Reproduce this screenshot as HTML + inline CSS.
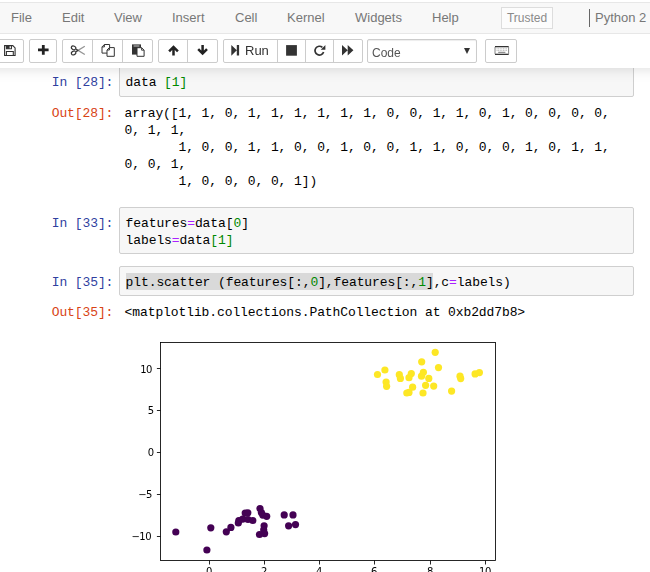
<!DOCTYPE html>
<html lang="en">
<head>
<meta charset="utf-8">
<title>Notebook</title>
<style>
html,body{margin:0;padding:0;}
body{width:650px;height:572px;overflow:hidden;background:#fff;position:relative;font-family:"Liberation Sans",Arial,sans-serif;font-size:13px;color:#000;}
#header{position:absolute;left:0;top:0;width:650px;height:68px;z-index:10;}
#header::before{content:"";position:absolute;left:-40px;right:-40px;top:0;bottom:0;background:#fff;box-shadow:0 0 12px 1px rgba(87,87,87,0.2);z-index:-1;}
#menubar{position:absolute;left:-6px;top:2px;width:670px;height:30px;background:#f8f8f8;border:1px solid #e7e7e7;border-radius:2px;}
.mi{position:absolute;top:10px;font-size:13px;line-height:15px;color:#777;white-space:nowrap;}
#trusted{position:absolute;left:501px;top:7px;width:52px;height:22px;border:1px solid #ddd;box-sizing:border-box;color:#8a8a8a;font-size:12px;line-height:20px;text-align:center;background:#fcfcfc;}
#ksep{position:absolute;left:589px;top:9px;width:1px;height:18px;background:#666;}
#kname{position:absolute;left:595px;top:10px;font-size:13px;line-height:15px;color:#777;white-space:nowrap;}
.btn{position:absolute;top:39px;height:24px;box-sizing:border-box;border:1px solid #ccc;background:#fff;}
.grp{border-radius:2px;}
.sep{position:absolute;top:0;width:1px;height:22px;background:#ccc;}
.ico{position:absolute;}
#runlbl{position:absolute;left:245px;top:43px;font-size:13px;line-height:15px;color:#333;}
#sel{position:absolute;left:367px;top:39px;width:110px;height:24px;box-sizing:border-box;border:1px solid #ccc;border-radius:2px;background:#fff;box-shadow:inset 0 1px 1px rgba(0,0,0,.075);}
#sel span{position:absolute;left:4px;top:6px;font-size:12px;line-height:14px;color:#555;}
#sel i{position:absolute;right:6px;top:7.5px;width:0;height:0;border-left:3.5px solid transparent;border-right:3.5px solid transparent;border-top:6px solid #333;}
.code{font-family:"Liberation Mono","DejaVu Sans Mono",monospace;font-size:13px;letter-spacing:-0.1px;line-height:17px;white-space:pre;}
.inbox{position:absolute;left:119px;width:515px;box-sizing:border-box;border:1px solid #cfcfcf;border-radius:2px;background:#f7f7f7;}
.ln{position:absolute;left:124.6px;height:17px;color:#000;}
.li{left:125.6px;}
#hl{position:absolute;left:125.6px;top:273px;width:307.6px;height:17px;background:#d9d9d9;}
.pr{position:absolute;left:51.7px;height:17px;}
.pin{color:#303f9f;}
.pout{color:#d84315;}
.n{color:#080;}
.o{color:#a2f;}
.hl{background:#d9d9d9;}
svg.plot{position:absolute;left:0;top:0;will-change:transform;}
</style>
</head>
<body>
<div id="header">
  <div id="menubar"></div>
  <div class="mi" style="left:11px">File</div>
  <div class="mi" style="left:62px">Edit</div>
  <div class="mi" style="left:114px">View</div>
  <div class="mi" style="left:172px">Insert</div>
  <div class="mi" style="left:235px">Cell</div>
  <div class="mi" style="left:287px">Kernel</div>
  <div class="mi" style="left:355px">Widgets</div>
  <div class="mi" style="left:432px">Help</div>
  <div id="trusted">Trusted</div>
  <div id="ksep"></div>
  <div id="kname">Python 2</div>

  <!-- toolbar -->
  <div class="btn grp" style="left:-5px;width:29px"></div>
  <div class="btn grp" style="left:29px;width:28px"></div>
  <div class="btn grp" style="left:62px;width:91px"><div class="sep" style="left:29px"></div><div class="sep" style="left:59px"></div></div>
  <div class="btn grp" style="left:158px;width:60px"><div class="sep" style="left:28px"></div></div>
  <div class="btn grp" style="left:223px;width:140px"><div class="sep" style="left:53px"></div><div class="sep" style="left:81px"></div><div class="sep" style="left:109px"></div></div>
  <div id="runlbl">Run</div>
  <div id="sel"><span>Code</span><i></i></div>
  <div class="btn grp" style="left:485px;width:32px"></div>

  <!-- icons -->
  <svg class="ico" style="left:0;top:0" width="650" height="68" viewBox="0 0 650 68">
    <!-- save -->
    <g fill="none" stroke="#333" stroke-width="1.1">
      <path d="M4.6 45.6h8.2l2.3 2.3v7.6h-10.5z"/>
      <path d="M6.4 45.6v3.2h5v-3.2z" fill="#333"/>
      <path d="M6.4 55.5v-4h6.9v4"/>
    </g>
    <path d="M9.6 46.2h1.3v2.1h-1.3z" fill="#fff"/>
    <!-- plus -->
    <path d="M41.9 45h2.8v3.5h3.9v2.8h-3.9v3.5h-2.8v-3.5h-3.9v-2.8h3.9z" fill="#222"/>
    <!-- scissors -->
    <g fill="none" stroke="#333" stroke-width="1.15">
      <ellipse cx="73.6" cy="47.8" rx="2.3" ry="1.8" transform="rotate(25 73.6 47.8)"/>
      <ellipse cx="73.6" cy="53" rx="2.3" ry="1.8" transform="rotate(-25 73.6 53)"/>
    </g>
    <path d="M75.6 48.9l9.2 5.6M75.6 51.9l9.2-5.6" fill="none" stroke="#959595" stroke-width="1.3"/>
    <path d="M75.6 48.9l2.8 1.7M75.6 51.9l2.8-1.7" fill="none" stroke="#333" stroke-width="1.1"/>
    <!-- copy -->
    <g fill="#fff" stroke="#333" stroke-width="1">
      <path d="M104.4 44.5h5.2v8.6h-7.6v-6.2z"/>
      <path d="M102 46.9h2.4v-2.4" fill="none"/>
      <path d="M109.4 47.6h4.9v8.7h-7.3v-6.3z"/>
      <path d="M107 50h2.4v-2.4" fill="none"/>
    </g>
    <!-- paste -->
    <path d="M132 44.4h9v10.2h-9z" fill="#333"/>
    <path d="M133.6 46h5.8" stroke="#ddd" stroke-width="0.9"/>
    <path d="M137 47.7h4.6l2.5 2.5v6.1h-7.1z" fill="#fff" stroke="#333" stroke-width="1"/>
    <path d="M141.6 47.7v2.5h2.5" fill="none" stroke="#333" stroke-width="0.9"/>
    <!-- arrow up -->
    <path d="M173.5 47.4v8.1M169.1 51.3l4.4-4.4 4.4 4.4" fill="none" stroke="#222" stroke-width="2.5"/>
    <!-- arrow down -->
    <path d="M202.6 45v8.1M198.2 49.2l4.4 4.4 4.4-4.4" fill="none" stroke="#222" stroke-width="2.5"/>
    <!-- run (step-forward) -->
    <path d="M231.3 44.9l5.5 5.4-5.5 5.4z M236.8 45h2.3v10.6h-2.3z" fill="#333"/>
    <!-- stop -->
    <rect x="286.1" y="45.1" width="10.8" height="10.6" fill="#333"/>
    <!-- repeat -->
    <path d="M323.6 52a4.4 4.4 0 1 1-1.2-4.6" fill="none" stroke="#333" stroke-width="1.7"/>
    <path d="M325.4 45v4.7h-4.7z" fill="#333"/>
    <!-- forward -->
    <path d="M342 45.1l5.7 5.2-5.7 5.2z M347.7 45.1l5.7 5.2-5.7 5.2z" fill="#333"/>
    <!-- keyboard -->
    <rect x="495" y="46.6" width="13.6" height="7.8" rx="0.8" fill="#fff" stroke="#777" stroke-width="0.9"/>
    <path d="M495 46.6h13.6M495 54.4h13.6" stroke="#333" stroke-width="1.1"/>
    <path d="M496.6 48.8h10.4M496.6 50.4h10.4" stroke="#aaa" stroke-width="0.9" stroke-dasharray="0.9 0.7"/>
    <path d="M498.2 52.3h7.2" stroke="#666" stroke-width="0.9"/>
  </svg>
</div>

<!-- cell 1 -->
<div class="inbox" style="top:60px;height:37px"></div>
<div class="pr pin code" style="top:74px">In [28]:</div>
<div class="ln li code" style="top:74px">data <span class="n">[</span><span class="n">1</span><span class="n">]</span></div>
<div class="pr pout code" style="top:105px">Out[28]:</div>
<div class="ln code" style="top:105px">array([1, 1, 0, 1, 1, 1, 1, 1, 1, 0, 0, 1, 1, 0, 1, 0, 0, 0, 0,</div>
<div class="ln code" style="top:122px">0, 1, 1,</div>
<div class="ln code" style="top:139px">       1, 0, 0, 1, 1, 0, 0, 1, 0, 0, 1, 1, 0, 0, 0, 1, 0, 1, 1,</div>
<div class="ln code" style="top:156px">0, 0, 1,</div>
<div class="ln code" style="top:173px">       1, 0, 0, 0, 0, 1])</div>

<!-- cell 2 -->
<div class="inbox" style="top:207px;height:47px"></div>
<div class="pr pin code" style="top:215px">In [33]:</div>
<div class="ln li code" style="top:215px">features<span class="o">=</span>data[<span class="n">0</span>]</div>
<div class="ln li code" style="top:232px">labels<span class="o">=</span>data<span class="n">[</span><span class="n">1</span><span class="n">]</span></div>

<!-- cell 3 -->
<div class="inbox" style="top:266px;height:30px"></div>
<div class="pr pin code" style="top:274px">In [35]:</div>
<div id="hl"></div>
<div class="ln li code" style="top:274px">plt.scatter (features[:,<span class="n">0</span>],features[:,<span class="n">1</span>],c<span class="o">=</span>labels)</div>
<div class="pr pout code" style="top:304px">Out[35]:</div>
<div class="ln code" style="top:304px">&lt;matplotlib.collections.PathCollection at 0xb2dd7b8&gt;</div>

<svg class="plot" width="650" height="572" viewBox="0 0 650 572">
<g fill="#fde725"><circle cx="435.2" cy="352.3" r="3.6"/><circle cx="421.7" cy="361.8" r="3.6"/><circle cx="438.5" cy="367.6" r="3.6"/><circle cx="384.9" cy="370.0" r="3.6"/><circle cx="377.5" cy="374.5" r="3.6"/><circle cx="399.3" cy="374.7" r="3.6"/><circle cx="400.4" cy="378.4" r="3.6"/><circle cx="411.3" cy="373.6" r="3.6"/><circle cx="409.0" cy="377.7" r="3.6"/><circle cx="423.4" cy="372.3" r="3.6"/><circle cx="421.5" cy="376.2" r="3.6"/><circle cx="428.8" cy="378.4" r="3.6"/><circle cx="386.1" cy="382.0" r="3.6"/><circle cx="386.6" cy="386.3" r="3.6"/><circle cx="425.6" cy="385.3" r="3.6"/><circle cx="433.7" cy="386.1" r="3.6"/><circle cx="412.6" cy="387.2" r="3.6"/><circle cx="409.0" cy="392.4" r="3.6"/><circle cx="406.8" cy="393.0" r="3.6"/><circle cx="423.0" cy="393.0" r="3.6"/><circle cx="451.6" cy="391.1" r="3.6"/><circle cx="460.0" cy="376.2" r="3.6"/><circle cx="460.7" cy="378.6" r="3.6"/><circle cx="475.1" cy="373.9" r="3.6"/><circle cx="479.4" cy="372.6" r="3.6"/></g>
<g fill="#440154"><circle cx="175.8" cy="532.0" r="3.6"/><circle cx="206.9" cy="550.0" r="3.6"/><circle cx="210.8" cy="527.8" r="3.6"/><circle cx="226.3" cy="531.8" r="3.6"/><circle cx="230.9" cy="527.4" r="3.6"/><circle cx="238.3" cy="523.0" r="3.6"/><circle cx="238.8" cy="520.7" r="3.6"/><circle cx="242.7" cy="519.1" r="3.6"/><circle cx="245.2" cy="513.1" r="3.6"/><circle cx="247.8" cy="512.8" r="3.6"/><circle cx="248.0" cy="519.5" r="3.6"/><circle cx="252.8" cy="520.5" r="3.6"/><circle cx="260.0" cy="508.5" r="3.6"/><circle cx="261.4" cy="512.6" r="3.6"/><circle cx="262.8" cy="515.1" r="3.6"/><circle cx="266.7" cy="516.3" r="3.6"/><circle cx="264.1" cy="525.8" r="3.6"/><circle cx="263.7" cy="529.9" r="3.6"/><circle cx="264.6" cy="533.6" r="3.6"/><circle cx="259.5" cy="534.5" r="3.6"/><circle cx="284.2" cy="514.9" r="3.6"/><circle cx="293.0" cy="514.9" r="3.6"/><circle cx="288.6" cy="525.8" r="3.6"/><circle cx="295.5" cy="524.6" r="3.6"/></g>
<rect x="160.5" y="342.5" width="335.0" height="218.0" fill="none" stroke="#000" stroke-width="0.85"/>
<g stroke="#000" stroke-width="0.85"><line x1="156.9" y1="368.5" x2="160.5" y2="368.5"/><line x1="156.9" y1="410.5" x2="160.5" y2="410.5"/><line x1="156.9" y1="452.5" x2="160.5" y2="452.5"/><line x1="156.9" y1="494.5" x2="160.5" y2="494.5"/><line x1="156.9" y1="536.5" x2="160.5" y2="536.5"/><line x1="209.5" y1="560.5" x2="209.5" y2="564.5"/><line x1="264.5" y1="560.5" x2="264.5" y2="564.5"/><line x1="319.5" y1="560.5" x2="319.5" y2="564.5"/><line x1="374.5" y1="560.5" x2="374.5" y2="564.5"/><line x1="430.5" y1="560.5" x2="430.5" y2="564.5"/><line x1="485.5" y1="560.5" x2="485.5" y2="564.5"/></g>
<g font-family="'DejaVu Sans', 'Liberation Sans', sans-serif" font-size="10" fill="#000"><text x="151.9" y="373" text-anchor="end" letter-spacing="-0.5">10</text><text x="153.5" y="414" text-anchor="end" letter-spacing="-0.5">5</text><text x="153.5" y="456" text-anchor="end" letter-spacing="-0.5">0</text><text x="151.9" y="498" text-anchor="end" letter-spacing="-0.5">−5</text><text x="151.1" y="540" text-anchor="end" letter-spacing="-0.5">−10</text><text x="208.9" y="575" text-anchor="middle" letter-spacing="-0.5">0</text><text x="263.9" y="575" text-anchor="middle" letter-spacing="-0.5">2</text><text x="318.9" y="575" text-anchor="middle" letter-spacing="-0.5">4</text><text x="373.9" y="575" text-anchor="middle" letter-spacing="-0.5">6</text><text x="429.9" y="575" text-anchor="middle" letter-spacing="-0.5">8</text><text x="484.9" y="575" text-anchor="middle" letter-spacing="-0.5">10</text></g>
</svg>
</body>
</html>
